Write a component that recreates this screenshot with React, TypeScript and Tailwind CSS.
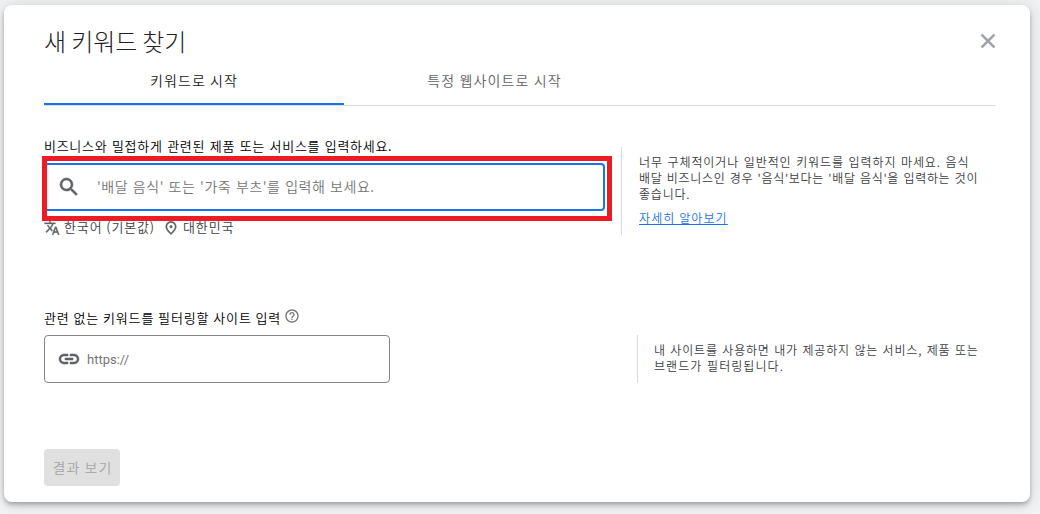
import React from 'react';
import {
  MdClose,
  MdHelpOutline,
  MdLink,
  MdOutlinePlace,
  MdSearch,
  MdTranslate,
} from 'react-icons/md';

interface HintProps {
  lines: { text: string; className: string }[];
}

const HintLines: React.FC<HintProps> = ({ lines }) => (
  <p className="text-[12px] leading-4 text-[#3c4043]">
    {lines.map(({ text, className }) => (
      <span key={text} className={`block whitespace-nowrap ${className}`}>
        {text}
      </span>
    ))}
  </p>
);

const Tabs: React.FC = () => (
  <div className="flex h-[50px] border-b border-[#dadce0] text-[14px] tracking-[1.1px]" role="tablist">
    <button
      role="tab"
      aria-selected="true"
      className="flex w-[300px] justify-center border-b-2 border-[#1a73e8] pt-[14px] leading-5 text-[#202124]"
    >
      키워드로 시작
    </button>
    <button
      role="tab"
      aria-selected="false"
      className="flex w-[300px] justify-center pt-[14px] pl-px leading-5 text-[#5f6368]"
    >
      특정 웹사이트로 시작
    </button>
  </div>
);

const KeywordSection: React.FC = () => (
  <section className="mt-[30px] flex h-[104px]">
    <div className="w-[577px]">
      <label className="block h-[27px] text-[13px] leading-5 tracking-[0.7px] [word-spacing:1px] whitespace-nowrap text-black">
        비즈니스와 밀접하게 관련된 제품 또는 서비스를 입력하세요.
      </label>
      <div className="relative flex h-12 w-[561px] items-center rounded border-2 border-[#1a73e8] pl-[11px]">
        <MdSearch className="size-6 stroke-[0.6] text-[#5f6368] [&>path:first-child]:stroke-none" />
        <input
          className="mb-[2px] ml-4 w-[440px] bg-transparent text-[14px] font-[350] tracking-[0.54px] [word-spacing:1px] outline-none placeholder:text-[#757575]"
          placeholder="'배달 음식' 또는 '가죽 부츠'를 입력해 보세요."
        />
        {/* highlight frame around the search field */}
        <div className="pointer-events-none absolute -top-[9px] -left-1 h-[65px] w-[570px] border-[5px] border-[#ed1c24]" />
      </div>
      <div className="mt-[6px] flex h-5 items-center text-[13px] tracking-[0.86px] text-[#3c4043]">
        <MdTranslate className="mt-[2px] size-4 stroke-[0.5] text-[#5f6368] [&>path:first-child]:stroke-none" />
        <span className="ml-1 whitespace-nowrap">한국어 (기본값)</span>
        <MdOutlinePlace className="mt-[2px] ml-2 size-4 stroke-[0.5] text-[#5f6368] [&>path:first-child]:stroke-none" />
        <span className="ml-1 whitespace-nowrap">대한민국</span>
      </div>
    </div>
    <aside className="mt-[11px] h-[88px] border-l border-[#dadce0] pt-[7px] pl-[17px]">
      <HintLines
        lines={[
          {
            text: '너무 구체적이거나 일반적인 키워드를 입력하지 마세요. 음식',
            className: 'tracking-[0.91px] [word-spacing:1px]',
          },
          {
            text: "배달 비즈니스인 경우 '음식'보다는 '배달 음식'을 입력하는 것이",
            className: 'tracking-[0.68px] [word-spacing:1px]',
          },
          { text: '좋습니다.', className: 'tracking-[0.8px]' },
        ]}
      />
      <a
        href="#"
        className="mt-2 block w-fit text-[12px] leading-4 tracking-[1.1px] whitespace-nowrap text-[#1a73e8] underline"
      >
        자세히 알아보기
      </a>
    </aside>
  </section>
);

const SiteSection: React.FC = () => (
  <section className="mt-[68px] flex">
    <div className="w-[593px]">
      <div className="flex h-[27px] text-[13px] leading-5 tracking-[0.88px] text-black">
        <span className="whitespace-nowrap">관련 없는 키워드를 필터링할 사이트 입력</span>
        <MdHelpOutline className="ml-[3px] size-4 text-[#757575]" />
      </div>
      <div className="flex h-12 w-[346px] items-center rounded border border-[#80868b] pl-[12px]">
        <MdLink className="size-6 stroke-[0.5] text-[#5f6368] [&>path:first-child]:stroke-none" />
        <input
          className="mt-px ml-[6px] w-[280px] bg-transparent font-[Roboto] text-[13px] font-normal outline-none placeholder:text-[#757575]"
          placeholder="https://"
        />
      </div>
    </div>
    <aside className="mt-[27px] h-12 border-l border-[#dadce0] pt-[7px] pl-4">
      <HintLines
        lines={[
          {
            text: '내 사이트를 사용하면 내가 제공하지 않는 서비스, 제품 또는',
            className: 'tracking-[0.82px] [word-spacing:1px]',
          },
          { text: '브랜드가 필터링됩니다.', className: 'tracking-[1.05px] [word-spacing:1px]' },
        ]}
      />
    </aside>
  </section>
);

const App: React.FC = () => (
  <div className="h-[514px] w-[1040px] overflow-hidden bg-[#f1f3f4] pt-[5px] pl-1 font-['Noto_Sans_CJK_KR',sans-serif] font-[350]">
    <main className="h-[497px] w-[1026px] rounded-lg bg-white pt-5 pr-[34px] pl-10 shadow-[0_2px_4px_-1px_rgba(0,0,0,0.2),0_4px_5px_rgba(0,0,0,0.14),0_1px_18px_rgba(0,0,0,0.14)]">
      <header className="flex h-[31px] items-center justify-between">
        <h1 className="text-[24px] leading-8 font-light tracking-[-0.1px] whitespace-nowrap text-[#202124]">
          새 키워드 찾기
        </h1>
        <button aria-label="닫기" className="-mr-1">
          <MdClose className="size-6 stroke-[0.6] text-[#9aa0a6] [&>path:first-child]:stroke-none" />
        </button>
      </header>
      <Tabs />
      <KeywordSection />
      <SiteSection />
      <button
        disabled
        className="mt-[66px] flex h-[37px] w-[76px] items-center justify-center rounded bg-[#e0e0e0] pb-px pl-px text-[14px] tracking-[1.1px] whitespace-nowrap text-[#a6a6a6]"
      >
        결과 보기
      </button>
    </main>
  </div>
);

export default App;
